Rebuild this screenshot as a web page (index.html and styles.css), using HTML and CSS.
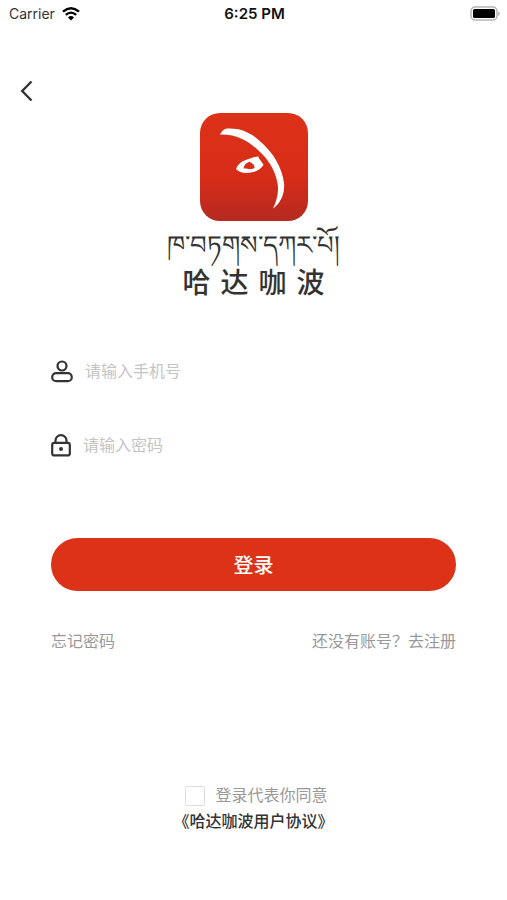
FILE: index.html
```html
<!DOCTYPE html>
<html lang="zh-CN">
<head>
  <meta charset="UTF-8">
  <meta name="viewport" content="width=device-width, initial-scale=1.0">
  <title>登录</title>
  <link rel="stylesheet" href="styles.css">
</head>
<body>

  <div class="status-bar">
    <div class="carrier">
      <span>Carrier</span>
      <svg width="18" height="14" viewBox="0 0 18 14" aria-hidden="true">
        <path d="M1 4.6Q9-2 17 4.6" fill="none" stroke="#000" stroke-width="2.5"/>
        <path d="M3.8 7.8Q9 3.4 14.2 7.8" fill="none" stroke="#000" stroke-width="2.3"/>
        <path d="M6 10.4Q9 7.8 12 10.4L9 13.6Z"/>
      </svg>
    </div>
    <div class="time">6:25 PM</div>
    <div class="battery">
      <svg width="30" height="16" viewBox="0 0 30 16" aria-hidden="true">
        <rect x="1" y="1" width="26" height="13" rx="4" fill="#fff" stroke="#b5b5b5" stroke-width="1.5"/>
        <rect x="3" y="3" width="22" height="9" rx="1.5"/>
        <path d="M28.3 5.5v4.4q1.4-.8 1.4-2.2T28.3 5.5Z" fill="#a0a0a0"/>
      </svg>
    </div>
  </div>

  <header>
    <button class="back" type="button" aria-label="返回">
      <svg width="14" height="22" viewBox="0 0 14 22" aria-hidden="true">
        <path d="M11.5 1.5L2.2 11l9.3 9.5" fill="none" stroke="#333" stroke-width="2.4"/>
      </svg>
    </button>
  </header>

  <main>
    <div class="brand">
      <svg class="logo" width="108" height="108" viewBox="0 0 108 108" aria-hidden="true">
        <defs>
          <linearGradient id="logoBg" x1="0" y1="0" x2="0" y2="1">
            <stop offset="0" stop-color="#dc3218"/>
            <stop offset=".6" stop-color="#d72c18"/>
            <stop offset="1" stop-color="#b42a20"/>
          </linearGradient>
        </defs>
        <rect width="108" height="108" rx="20" fill="url(#logoBg)"/>
        <path d="M20 21.5C22 18 24 15.5 28 15.5C41 15 52 20 62 30C73 40 82 54 84 70C85 80 81 90 73 95.5C77 87 79 79 77.5 70C75 56 67 45 58 37C48 28 37 21 20 21.5Z" fill="#fff"/>
        <path fill-rule="evenodd" d="M36 56C38 51 42 48 47 46.5C51 45.5 54 43.5 58.5 43.5C58.5 46 62.5 49 63.5 52C61 56 56 59 51 59.5C46 60.5 39 60 36 56ZM43.5 55.5C47 55 50 57.5 54.5 55C55 52 51.5 49 49 49C46 50 44 52 43.5 55.5Z" fill="#fff"/>
      </svg>
      <div class="name-bo" lang="bo">ཁ་བཏགས་དཀར་པོ།</div>
      <h1 class="name-zh"><span>哈</span><span>达</span><span>咖</span><span>波</span></h1>
    </div>

    <form class="login">
      <div class="field">
        <label for="phone" aria-label="手机号">
          <svg width="22" height="24" viewBox="0 0 22 24" fill="none" stroke="#333" stroke-width="2.2" aria-hidden="true">
            <circle cx="11" cy="6" r="4.5"/>
            <rect x="1.2" y="13.2" width="19.6" height="8" rx="4"/>
          </svg>
        </label>
        <input type="tel" id="phone" placeholder="请输入手机号">
      </div>
      <div class="field">
        <label for="password" aria-label="密码">
          <svg width="20" height="24" viewBox="0 0 20 24" fill="none" stroke="#333" stroke-width="2.2" aria-hidden="true">
            <rect x="1.2" y="8.8" width="17.6" height="12.6" rx="2"/>
            <path d="M4.5 8.8V6.4a5.5 5.2 0 0 1 11 0v2.4"/>
            <circle cx="10" cy="15" r="2" fill="#333" stroke="none"/>
          </svg>
        </label>
        <input type="password" id="password" placeholder="请输入密码">
      </div>

      <button class="submit" type="submit">登录</button>

      <div class="links">
        <a href="#">忘记密码</a>
        <a href="#">还没有账号？去注册</a>
      </div>

      <div class="agreement">
        <label class="agree"><input type="checkbox"><span>登录代表你同意</span></label>
        <a href="#">《哈达咖波用户协议》</a>
      </div>
    </form>
  </main>

</body>
</html>
```
FILE: styles.css
```css
* {
  box-sizing: border-box;
}

body {
  margin: 0;
  background: #fff;
  color: #333;
  font-family: "Liberation Sans", "Noto Sans CJK SC", sans-serif;
  font-size: 16px;
  line-height: 24px;
}

svg {
  display: block;
}

a {
  color: inherit;
  text-decoration: none;
}

.status-bar {
  display: grid;
  grid-template-columns: 1fr auto 1fr;
  align-items: center;
  height: 28px;
  padding: 0 7px 0 9px;
  font-family: Inter, sans-serif;
  font-size: 14px;
}

.carrier {
  display: flex;
  align-items: center;
  gap: 7px;
}

.time {
  color: #111;
  font-size: 15px;
  font-weight: 600;
}

.battery {
  justify-self: end;
}

header {
  padding: 48px 16px 0;
}

.back {
  display: block;
  padding: 4px;
  border: none;
  background: none;
  cursor: pointer;
}

.brand {
  display: flex;
  flex-direction: column;
  align-items: center;
  margin-top: 7px;
}

.name-bo {
  margin-top: 6px;
  font-size: 26px;
  line-height: 36px;
}

.name-zh {
  display: flex;
  gap: 10px;
  margin: 3px 0 0;
  font-family: "Liberation Serif", "Noto Sans CJK SC", serif;
  font-size: 28px;
  font-weight: 500;
  line-height: 36px;
}

.login {
  padding: 54px 51px 0;
}

.field {
  display: flex;
  align-items: center;
  gap: 12px;
  height: 32px;
  margin-bottom: 42px;
}

.field input {
  flex: 1;
  min-width: 0;
  height: 32px;
  padding: 0;
  border: none;
  outline: none;
  background: none;
  color: #333;
  font: inherit;
}

.field input::placeholder {
  color: #c4c4c4;
}

.submit {
  display: block;
  width: 100%;
  height: 53px;
  margin-top: 76px;
  border: none;
  border-radius: 27px;
  background: #dc3217;
  color: #fff;
  font-family: inherit;
  font-size: 20px;
  font-weight: 500;
  cursor: pointer;
}

.links {
  display: flex;
  justify-content: space-between;
  margin-top: 39px;
  color: #999;
}

.agreement {
  display: flex;
  flex-direction: column;
  align-items: center;
  gap: 2px;
  margin-top: 130px;
}

.agree {
  display: flex;
  align-items: center;
  gap: 10px;
  padding-left: 6px;
  color: #999;
}

.agree input {
  appearance: none;
  width: 20px;
  height: 20px;
  margin: 0;
  border: 1px solid #ddd;
  border-radius: 2px;
}

.agree input:checked {
  background: #dc3217;
}

.agreement a {
  font-weight: 500;
}
```
